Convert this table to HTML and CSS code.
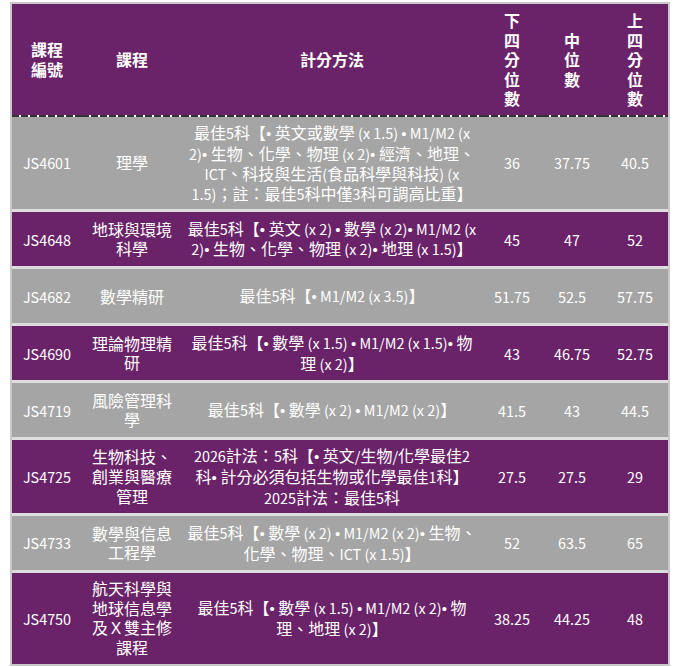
FILE: index.html
```html
<!DOCTYPE html>
<html lang="zh-Hant">
<head>
<meta charset="utf-8">
<title>計分方法</title>
<link rel="stylesheet" href="styles.css">
</head>
<body>
<div class="wrap">
<table class="scores">
<colgroup>
<col class="c-code"><col class="c-name"><col class="c-method"><col class="c-q1"><col class="c-med"><col class="c-q3">
</colgroup>
<thead>
<tr>
<th>課程<br>編號</th>
<th>課程</th>
<th>計分方法</th>
<th>下<br>四<br>分<br>位<br>數</th>
<th>中<br>位<br>數</th>
<th>上<br>四<br>分<br>位<br>數</th>
</tr>
</thead>
<tbody>
<tr class="gray">
<td class="lat">JS4601</td>
<td>理學</td>
<td class="method">最佳<span class="l">5</span>科【<span class="dot">•</span> 英文或數學<span class="l"> (x 1.5) </span><span class="dot">•</span><span class="l"> M1/M2 (x</span><br><span class="l">2)</span><span class="dot">•</span> 生物、化學、物理<span class="l"> (x 2)</span><span class="dot">•</span> 經濟、地理、<br><span class="l">ICT</span>、科技與生活<span class="l">(</span>食品科學與科技<span class="l">) (x</span><br><span class="l">1.5)</span>；註：最佳<span class="l">5</span>科中僅<span class="l">3</span>科可調高比重】</td>
<td class="lat">36</td><td class="lat">37.75</td><td class="lat">40.5</td>
</tr>
<tr class="purple">
<td class="lat">JS4648</td>
<td>地球與環境<br>科學</td>
<td class="method">最佳<span class="l">5</span>科【<span class="dot">•</span> 英文<span class="l"> (x 2) </span><span class="dot">•</span> 數學<span class="l"> (x 2)</span><span class="dot">•</span><span class="l"> M1/M2 (x</span><br><span class="l">2)</span><span class="dot">•</span> 生物、化學、物理<span class="l"> (x 2)</span><span class="dot">•</span> 地理<span class="l"> (x 1.5)</span>】</td>
<td class="lat">45</td><td class="lat">47</td><td class="lat">52</td>
</tr>
<tr class="gray">
<td class="lat">JS4682</td>
<td>數學精研</td>
<td class="method">最佳<span class="l">5</span>科【<span class="dot">•</span><span class="l"> M1/M2 (x 3.5)</span>】</td>
<td class="lat">51.75</td><td class="lat">52.5</td><td class="lat">57.75</td>
</tr>
<tr class="purple">
<td class="lat">JS4690</td>
<td>理論物理精<br>研</td>
<td class="method">最佳<span class="l">5</span>科【<span class="dot">•</span> 數學<span class="l"> (x 1.5) </span><span class="dot">•</span><span class="l"> M1/M2 (x 1.5)</span><span class="dot">•</span> 物<br>理<span class="l"> (x 2)</span>】</td>
<td class="lat">43</td><td class="lat">46.75</td><td class="lat">52.75</td>
</tr>
<tr class="gray">
<td class="lat">JS4719</td>
<td>風險管理科<br>學</td>
<td class="method">最佳<span class="l">5</span>科【<span class="dot">•</span> 數學<span class="l"> (x 2) </span><span class="dot">•</span><span class="l"> M1/M2 (x 2)</span>】</td>
<td class="lat">41.5</td><td class="lat">43</td><td class="lat">44.5</td>
</tr>
<tr class="purple">
<td class="lat">JS4725</td>
<td>生物科技、<br>創業與醫療<br>管理</td>
<td class="method"><span class="l">2026</span>計法：<span class="l">5</span>科【<span class="dot">•</span> 英文<span class="l">/</span>生物<span class="l">/</span>化學最佳<span class="l">2</span><br>科<span class="dot">•</span> 計分必須包括生物或化學最佳<span class="l">1</span>科】<br><span class="l">2025</span>計法：最佳<span class="l">5</span>科</td>
<td class="lat">27.5</td><td class="lat">27.5</td><td class="lat">29</td>
</tr>
<tr class="gray">
<td class="lat">JS4733</td>
<td>數學與信息<br>工程學</td>
<td class="method">最佳<span class="l">5</span>科【<span class="dot">•</span> 數學<span class="l"> (x 2) </span><span class="dot">•</span><span class="l"> M1/M2 (x 2)</span><span class="dot">•</span> 生物、<br>化學、物理、<span class="l">ICT (x 1.5)</span>】</td>
<td class="lat">52</td><td class="lat">63.5</td><td class="lat">65</td>
</tr>
<tr class="purple last">
<td class="lat">JS4750</td>
<td>航天科學與<br>地球信息學<br>及Ｘ雙主修<br>課程</td>
<td class="method">最佳<span class="l">5</span>科【<span class="dot">•</span> 數學<span class="l"> (x 1.5) </span><span class="dot">•</span><span class="l"> M1/M2 (x 2)</span><span class="dot">•</span> 物<br>理、地理<span class="l"> (x 2)</span>】</td>
<td class="lat">38.25</td><td class="lat">44.25</td><td class="lat">48</td>
</tr>
</tbody>
</table>
</div>
</body>
</html>
```
FILE: styles.css
```css
body {
  margin: 0;
  background: #ffffff;
}

.wrap {
  padding: 2px 0 0 10px;
}

.scores {
  border-collapse: separate;
  border-spacing: 0;
  table-layout: fixed;
  width: 660px;
  border: 2px solid #c9c9c9;
  background: #ffffff;
  font-family: "Noto Sans CJK TC", "Noto Sans CJK SC", sans-serif;
  font-size: 16px;
  line-height: 19.6px;
  color: #ffffff;
}

.c-code { width: 70px; }
.c-name { width: 100px; }
.c-method { width: 300px; }
.c-q1 { width: 60px; }
.c-med { width: 60px; }
.c-q3 { width: 66px; }

.scores th {
  font-weight: bold;
  padding: 7px 4px 8px;
  text-align: center;
  vertical-align: middle;
  background: repeating-linear-gradient(90deg, #333333 0 7px, #ffffff 7px 9px) left bottom / 100% 2px no-repeat, #6a2369;
}

.scores td {
  padding: 6px 6px;
  text-align: center;
  vertical-align: middle;
  font-weight: normal;
  border-bottom: 3px solid #dddddd;
}

.scores td.lat {
  font-size: 14.4px;
}

.scores td.method {
  white-space: nowrap;
  padding: 6px 2px;
}

.l {
  font-size: 14.4px;
}

.dot {
  font-family: "Liberation Sans", sans-serif;
  font-size: 15px;
}

.scores tbody tr {
  height: 57px;
}

.scores tbody tr.last {
  height: 54px;
}

.scores tr.last td {
  border-bottom: none;
}

.gray td {
  background: #a5a5a5;
}

.purple td {
  background: #6a2369;
}
```
